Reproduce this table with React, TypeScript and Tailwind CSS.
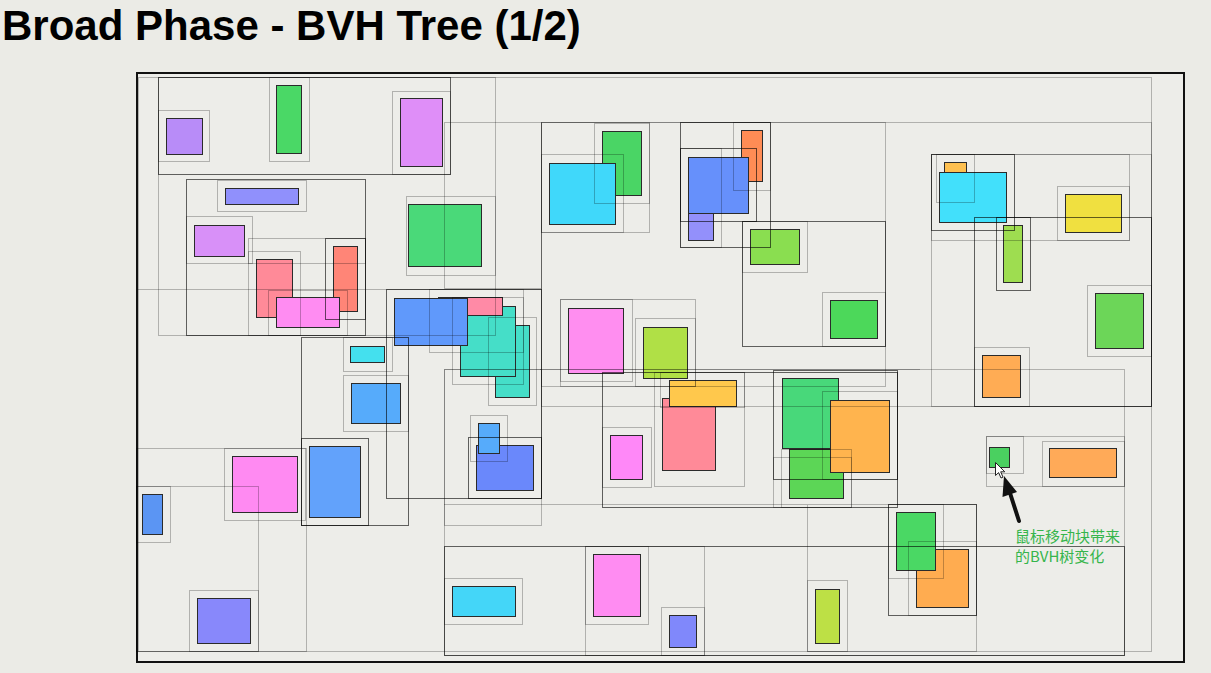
import React from 'react'

// page coords of the frame's inner corner
const OX = 138
const OY = 74

type Rect = [number, number, number, number, string]

// filled AABBs, drawn in order (later ones on top)
const shapes: Rect[] = [
  [166, 118, 203, 155, 'bg-[#b88cf8]'],
  [276, 85, 302, 154, 'bg-[#4ad866]'],
  [400, 98, 443, 167, 'bg-[#df8ef8]'],
  [225, 188, 299, 205, 'bg-[#9090fc]'],
  [194, 225, 245, 257, 'bg-[#d890f8]'],
  [256, 259, 293, 318, 'bg-[#ff8a98]'],
  [333, 246, 358, 312, 'bg-[#ff8577]'],
  [276, 297, 340, 328, 'bg-[#ff8cf2]'],
  [408, 204, 482, 267, 'bg-[#4ad979]'],
  [495, 325, 530, 398, 'bg-[#45dec8]'],
  [460, 306, 516, 377, 'bg-[#45dec8]'],
  [438, 297, 503, 316, 'bg-[#ff8aa6]'],
  [394, 298, 468, 346, 'bg-[#6099fb]'],
  [350, 346, 385, 363, 'bg-[#44e0ee]'],
  [351, 383, 401, 424, 'bg-[#56abfb]'],
  [476, 445, 534, 491, 'bg-[#6a88fb]'],
  [478, 423, 500, 454, 'bg-[#56abfb]'],
  [232, 456, 298, 513, 'bg-[#ff8af2]'],
  [309, 446, 361, 518, 'bg-[#62a2fb]'],
  [142, 494, 163, 535, 'bg-[#5b95f3]'],
  [197, 598, 251, 644, 'bg-[#8888fb]'],
  [452, 586, 516, 617, 'bg-[#44d6f8]'],
  [593, 554, 641, 617, 'bg-[#ff8cf2]'],
  [669, 615, 697, 648, 'bg-[#8088fb]'],
  [602, 131, 642, 196, 'bg-[#4ad565]'],
  [549, 163, 616, 225, 'bg-[#40d8fa]'],
  [741, 130, 763, 182, 'bg-[#ff8c55]'],
  [688, 213, 714, 241, 'bg-[#9390fb]'],
  [688, 157, 749, 214, 'bg-[#6690fb]'],
  [750, 229, 800, 265, 'bg-[#8ade50]'],
  [830, 300, 878, 339, 'bg-[#4cd85a]'],
  [944, 162, 967, 174, 'bg-[#fec050]'],
  [939, 172, 1007, 223, 'bg-[#42e0fb]'],
  [1065, 194, 1122, 233, 'bg-[#f0e040]'],
  [1003, 225, 1023, 283, 'bg-[#9edd50]'],
  [1095, 293, 1144, 349, 'bg-[#6cd658]'],
  [982, 355, 1021, 398, 'bg-[#ffac54]'],
  [568, 308, 624, 374, 'bg-[#ff8ef0]'],
  [643, 327, 688, 379, 'bg-[#b0e046]'],
  [662, 398, 716, 471, 'bg-[#ff8a98]'],
  [669, 380, 737, 407, 'bg-[#ffc84c]'],
  [610, 435, 643, 480, 'bg-[#ff88f8]'],
  [789, 449, 844, 499, 'bg-[#5cd656]'],
  [782, 378, 839, 449, 'bg-[#48d87a]'],
  [830, 400, 890, 473, 'bg-[#ffb44e]'],
  [989, 447, 1010, 468, 'bg-[#4ad060]'],
  [1049, 448, 1117, 478, 'bg-[#ffaa58]'],
  [916, 549, 969, 608, 'bg-[#ffac50]'],
  [896, 512, 936, 571, 'bg-[#4ad864]'],
  [815, 589, 840, 644, 'bg-[#bde045]'],
]

const L = 'border-black/25'
const D = 'border-black/60'

// tree nodes (parent AABBs)
const nodes: Rect[] = [
  [138, 77, 1152, 652, L],
  [158, 77, 451, 175, D],
  [158, 110, 210, 162, L],
  [269, 77, 310, 162, L],
  [392, 91, 451, 175, L],
  [158, 77, 496, 336, L],
  [186, 179, 366, 336, D],
  [217, 180, 307, 212, L],
  [186, 216, 253, 264, L],
  [248, 251, 301, 336, L],
  [325, 238, 366, 320, D],
  [248, 238, 366, 264, L],
  [268, 290, 348, 336, L],
  [406, 196, 496, 276, L],
  [444, 122, 542, 289, L],
  [386, 289, 542, 499, D],
  [343, 337, 393, 372, L],
  [343, 375, 409, 432, L],
  [301, 337, 409, 526, D],
  [429, 289, 524, 353, L],
  [452, 297, 524, 385, L],
  [488, 317, 537, 406, L],
  [470, 415, 508, 462, L],
  [468, 437, 542, 499, D],
  [224, 448, 306, 521, L],
  [301, 438, 369, 526, D],
  [136, 486, 259, 652, L],
  [136, 486, 171, 543, L],
  [189, 590, 259, 652, L],
  [136, 448, 307, 652, L],
  [444, 369, 542, 526, L],
  [444, 546, 1125, 656, D],
  [444, 578, 523, 625, L],
  [585, 546, 649, 625, L],
  [585, 546, 705, 656, L],
  [661, 607, 705, 656, L],
  [541, 122, 1152, 407, L],
  [541, 122, 886, 387, L],
  [541, 122, 650, 233, L],
  [594, 123, 650, 204, L],
  [541, 154, 624, 233, L],
  [680, 122, 771, 248, D],
  [733, 122, 771, 191, L],
  [680, 148, 757, 222, D],
  [680, 148, 722, 248, L],
  [742, 221, 808, 273, L],
  [742, 221, 886, 347, D],
  [822, 292, 886, 347, L],
  [931, 154, 1015, 231, D],
  [936, 154, 975, 203, L],
  [931, 154, 1130, 241, L],
  [1057, 186, 1130, 241, L],
  [996, 217, 1031, 291, D],
  [974, 217, 1152, 407, D],
  [931, 154, 1152, 407, L],
  [1087, 285, 1152, 357, L],
  [974, 347, 1030, 407, L],
  [560, 299, 696, 387, L],
  [560, 299, 633, 382, L],
  [635, 318, 696, 387, L],
  [602, 372, 898, 508, D],
  [773, 370, 898, 480, D],
  [654, 372, 745, 487, L],
  [660, 372, 745, 408, L],
  [602, 427, 652, 488, L],
  [773, 457, 852, 508, L],
  [781, 449, 852, 508, L],
  [822, 391, 898, 480, L],
  [444, 369, 1125, 656, L],
  [986, 436, 1125, 487, L],
  [986, 436, 1024, 474, L],
  [1042, 441, 1125, 487, L],
  [807, 504, 977, 652, L],
  [888, 504, 977, 616, D],
  [888, 504, 944, 579, L],
  [908, 541, 977, 616, L],
  [807, 580, 848, 652, L],
]

// loose single edges
const hlines: [number, number, number][] = [
  [138, 542, 289],
  [444, 807, 504],
  [540, 920, 369],
]

function Cursor() {
  return (
    <svg className="absolute" style={{ left: 995 - OX, top: 462 - OY }} width="11" height="17" viewBox="0 0 11 17">
      <path d="M0.5 0.5 L0.5 13.5 L3.6 10.6 L6 16 L8 15.1 L5.7 9.8 L9.8 9.8 Z" fill="#fff" stroke="#222" strokeWidth="1" strokeLinejoin="round" />
    </svg>
  )
}

function Arrow() {
  return (
    <svg className="absolute" style={{ left: 995 - OX, top: 470 - OY }} width="30" height="60" viewBox="995 470 30 60">
      <line x1="1019" y1="521" x2="1010" y2="493" stroke="#111" strokeWidth="4" strokeLinecap="round" />
      <polygon points="1004,476 1017,492 1002.5,497" fill="#111" />
    </svg>
  )
}

export default function App() {
  return (
    <div className="min-h-screen overflow-hidden bg-[#ebebe6] font-['Liberation_Sans',Arial,sans-serif] text-black">
      <h1 className="h-[72px] pl-[2px] pt-[5px] text-[42px] font-bold leading-[42px]">
        Broad Phase - BVH Tree (1/2)
      </h1>

      <div className="relative ml-[136px] h-[591px] w-[1049px] border-2 border-[#111] bg-[#ededE9]">
        {shapes.map(([x1, y1, x2, y2, cls], i) => (
          <div
            key={'s' + i}
            className={`absolute border-[1.5px] border-[#2b2b2b] ${cls}`}
            style={{ left: x1 - OX, top: y1 - OY, width: x2 - x1, height: y2 - y1 }}
          />
        ))}

        {nodes.map(([x1, y1, x2, y2, cls], i) => (
          <div
            key={'n' + i}
            className={`absolute border ${cls}`}
            style={{ left: x1 - OX, top: y1 - OY, width: x2 - x1, height: y2 - y1 }}
          />
        ))}

        {hlines.map(([x1, x2, y], i) => (
          <div
            key={'h' + i}
            className="absolute h-px bg-black/25"
            style={{ left: x1 - OX, top: y - OY, width: x2 - x1 }}
          />
        ))}

        <Cursor />
        <Arrow />

        <div className="absolute left-[877px] top-[452px] text-[15px] leading-[20px] text-[#36b54c] font-['Noto_Sans_CJK_SC','Noto_Sans',sans-serif]">
          <div>鼠标移动块带来</div>
          <div>的BVH树变化</div>
        </div>
      </div>
    </div>
  )
}
